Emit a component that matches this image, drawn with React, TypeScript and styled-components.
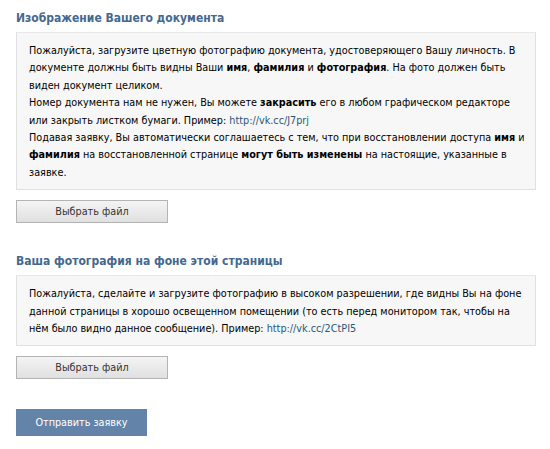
import styled, { createGlobalStyle } from "styled-components";

const GlobalStyle = createGlobalStyle`
  html, body {
    margin: 0;
    padding: 0;
    background: #ffffff;
  }
  body {
    font-family: "DejaVu Sans Condensed", "DejaVu Sans", "Liberation Sans", sans-serif;
    font-stretch: condensed;
    font-size: 10.75px;
    color: #000000;
  }
`;

const Page = styled.div`
  width: 520px;
  padding: 9px 14px 13px 16px;
  display: flex;
  flex-direction: column;
`;

const Section = styled.section`
  display: flex;
  flex-direction: column;
  & + & {
    margin-top: 29px;
  }
`;

const Heading = styled.h2`
  margin: 0 0 5px 0;
  font-size: 12px;
  line-height: 18px;
  font-weight: bold;
  color: #45688e;
`;

const InfoBox = styled.div`
  background: #f7f7f7;
  border: 1px solid #e0e0e0;
  border-top-color: #e8e8e8;
  padding: 9px 12px 8px 12px;
  line-height: 17.4px;
  white-space: nowrap;
`;

const Line = styled.p`
  margin: 0;
`;

const Link = styled.a`
  color: #2b587a;
  text-decoration: none;
`;

const FileButton = styled.button`
  margin-top: 10px;
  width: 152px;
  height: 23px;
  border: 1px solid #b4b4b4;
  border-radius: 0;
  background: linear-gradient(#f4f4f4, #e0e0e0);
  font: inherit;
  color: #333333;
  padding: 0;
  cursor: pointer;
`;

const SubmitButton = styled.button`
  margin-top: 30px;
  align-self: flex-start;
  width: 131px;
  height: 27px;
  border: 0;
  background: #6383a8;
  color: #ffffff;
  font: inherit;
  padding: 0;
  cursor: pointer;
`;

export default function App() {
  return (
    <>
      <GlobalStyle />
      <Page>
        <Section>
          <Heading>Изображение Вашего документа</Heading>
          <InfoBox>
            <Line>
              Пожалуйста, загрузите цветную фотографию документа, удостоверяющего Вашу
              личность. В
              <br />
              документе должны быть видны Ваши <b>имя</b>, <b>фамилия</b> и{" "}
              <b>фотография</b>. На фото должен быть
              <br />
              виден документ целиком.
            </Line>
            <Line>
              Номер документа нам не нужен, Вы можете <b>закрасить</b> его в любом
              графическом редакторе
              <br />
              или закрыть листком бумаги. Пример: <Link href="#">http://vk.cc/J7prj</Link>
            </Line>
            <Line>
              Подавая заявку, Вы автоматически соглашаетесь с тем, что при восстановлении
              доступа <b>имя</b> и
              <br />
              <b>фамилия</b> на восстановленной странице <b>могут быть изменены</b> на
              настоящие, указанные в
              <br />
              заявке.
            </Line>
          </InfoBox>
          <FileButton type="button">Выбрать файл</FileButton>
        </Section>

        <Section>
          <Heading>Ваша фотография на фоне этой страницы</Heading>
          <InfoBox>
            <Line>
              Пожалуйста, сделайте и загрузите фотографию в высоком разрешении, где видны
              Вы на фоне
              <br />
              данной страницы в хорошо освещенном помещении (то есть перед монитором так,
              чтобы на
              <br />
              нём было видно данное сообщение). Пример:{" "}
              <Link href="#">http://vk.cc/2CtPI5</Link>
            </Line>
          </InfoBox>
          <FileButton type="button">Выбрать файл</FileButton>
        </Section>

        <SubmitButton type="button">Отправить заявку</SubmitButton>
      </Page>
    </>
  );
}
